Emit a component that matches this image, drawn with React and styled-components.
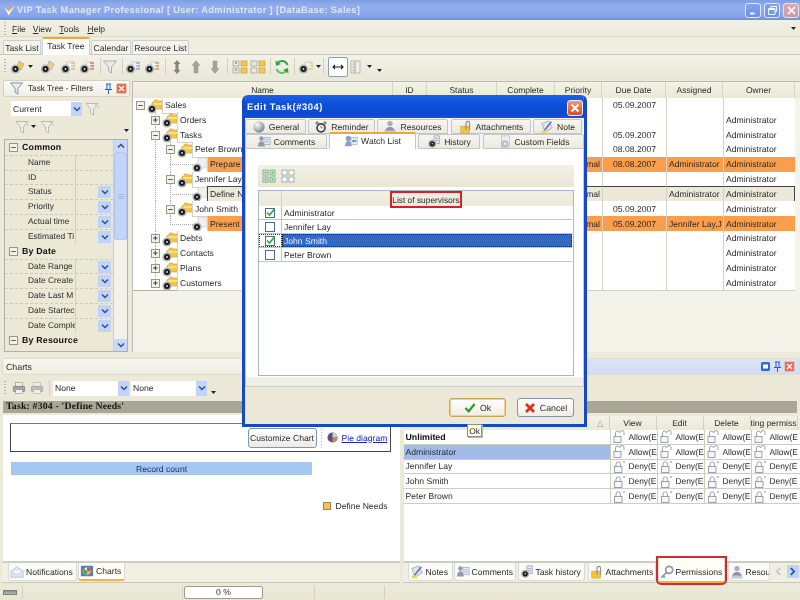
import React from "react";
import styled, { createGlobalStyle, css } from "styled-components";

const Global = createGlobalStyle`
  html, body { margin: 0; padding: 0; background: #ece9d8; }
  #root { width: 800px; height: 600px; overflow: hidden; }
  * { box-sizing: border-box; }
`;

const FONT = `"Liberation Sans", Arial, sans-serif`;

const Screen = styled.div`
  position: relative; width: 800px; height: 600px; overflow: hidden;
  display: flex; flex-direction: column; text-rendering: geometricPrecision;
  background: #ece9d8; font: 8.4px ${FONT}; color: #2b2b2b; filter: blur(.3px);
`;

/* ---------- drawn icons ---------- */
const Svg = ({ s = 16, children, vb = "0 0 16 16" }) => (
  <svg width={s} height={s} viewBox={vb} style={{ flex: "none", display: "block" }}>{children}</svg>
);
const Clock = ({ x = 5, y = 11 }) => (
  <g>
    <circle cx={x} cy={y} r="4.6" fill="#b4b4b8" />
    <circle cx={x} cy={y} r="3" fill="#1d1d1d" />
    <circle cx={x} cy={y} r=".9" fill="#e6e6e6" />
  </g>
);
const FolderClock = () => (
  <Svg>
    <path d="M5 4.500h1.500l1-2.500h3l1 1H15v8H5z" fill="#f6c544" stroke="#cf9f36" strokeWidth=".6" />
    <rect x="6" y="5" width="9" height="2" fill="#fde08a" />
    <Clock />
  </Svg>
);
const PageClock = () => (
  <Svg>
    <rect x="6" y="1" width="9" height="10" fill="#f0f0ee" stroke="#c6c6c4" strokeWidth=".6" />
    <Clock />
  </Svg>
);
const ToolClock = ({ c = "#f3c94a", kind = "doc" }) => (
  <Svg>
    {kind === "doc" && <rect x="7" y="3" width="7" height="7" fill="#f2f1ec" stroke="#bbb" strokeWidth=".6" />}
    {kind === "star" && <path d="M9 2l5 3-3 6-4-3z" fill={c} stroke="#8a8a8a" strokeWidth=".5" />}
    {kind !== "star" && <path d="M11 4h4M11 7h4M11 10h4" stroke={c} strokeWidth="1.2" />}
    <Clock x={5.5} y={10} />
  </Svg>
);
const Funnel = ({ s = 16, c = "#a9b0b0" }) => (
  <Svg s={s}>
    <path d="M1.500 2h13L9.500 8v6l-3-2V8z" fill="#e7ecee" stroke={c} strokeWidth="1" />
  </Svg>
);
const FunnelX = () => (
  <Svg>
    <path d="M2 2.500h12L9.500 8v6l-3-2V8z" fill="#eeeee6" stroke="#b9bcb4" strokeWidth="1" />
    <path d="M10 2l5 5" stroke="#b9bcb4" strokeWidth="1" />
  </Svg>
);
const VArrow = ({ dir }) => (
  <Svg>
    {dir === "both" && <path d="M8 1l3.500 4H9.600v6h1.900L8 15l-3.500-4h1.900V5H4.500z" fill="#85857f" />}
    {dir === "up" && <path d="M8 1.500l4 5H10V14H6V6.500H4z" fill="#a3a39d" stroke="#8e8e88" strokeWidth=".4" />}
    {dir === "down" && <path d="M6 2h4v7.500h2l-4 5-4-5h2z" fill="#a3a39d" stroke="#8e8e88" strokeWidth=".4" />}
  </Svg>
);
const Blocks = ({ v }) => (
  <Svg>
    {[2, 9].map((y) => [1, 9].map((x) => (
      <rect key={x + "-" + y} x={x} y={y} width="6" height="5"
        fill={x === 9 ? "#f3c94a" : "#e9e9e2"} stroke={x === 9 ? "#c79f35" : "#9a9a92"} strokeWidth=".7" />
    )))}
    {v && <path d="M3 4h2M3 11h2" stroke="#444" strokeWidth=".8" />}
  </Svg>
);
const Refresh = () => (
  <Svg>
    <path d="M13.500 6A6 6 0 0 0 3 4.500" fill="none" stroke="#3aa142" strokeWidth="2" />
    <path d="M2.500 10A6 6 0 0 0 13 11.500" fill="none" stroke="#5ec060" strokeWidth="2" />
    <path d="M1.500 1.500L2 7l5-2zM14.500 14.500L14 9l-5 2z" fill="#3aa142" />
  </Svg>
);
const Printer = ({ dim }) => (
  <Svg s={14}>
    <g opacity={dim ? 0.65 : 1}>
      <rect x="4" y="1.500" width="8" height="5" fill="#f2f2f2" stroke="#8f8f8f" strokeWidth=".7" />
      <rect x="1.500" y="6" width="13" height="6" rx="1" fill="#a3a5a8" stroke="#6e7073" strokeWidth=".7" />
      <rect x="4" y="10" width="8" height="4.500" fill="#f2f2f2" stroke="#8f8f8f" strokeWidth=".7" />
    </g>
  </Svg>
);
const FitWidth = () => (
  <Svg>
    <path d="M3 8h10M5 6L3 8l2 2M11 6l2 2-2 2" fill="none" stroke="#222" strokeWidth="1.100" />
  </Svg>
);
const Columns = () => (
  <Svg>
    <rect x="2" y="2" width="9" height="12" fill="#eeeee6" stroke="#b0b0a8" strokeWidth=".8" />
    <path d="M6 2v12M3.500 5h1.500M3.500 8h1.500M3.500 11h1.500" stroke="#8a8a84" strokeWidth=".8" />
  </Svg>
);
const CheckGrid = ({ on }) => (
  <Svg s={14} vb="0 0 14 14">
    {[1, 8].map((y) => [1, 8].map((x) => (
      <g key={x + "/" + y}>
        <rect x={x} y={y} width="5" height="5" fill={on ? "#dff0da" : "#fff"} stroke={on ? "#6c9f7e" : "#8ea29a"} strokeWidth=".8" />
        {on && <rect x={x + 1.600} y={y + 1.600} width="1.800" height="1.800" fill="#55a05f" />}
      </g>
    )))}
  </Svg>
);
const Sphere = () => (
  <Svg>
    <defs>
      <radialGradient id="sph" cx=".35" cy=".3" r=".8">
        <stop offset="0" stopColor="#fdfdfd" /><stop offset="1" stopColor="#6f7587" />
      </radialGradient>
    </defs>
    <circle cx="8" cy="8" r="6.500" fill="url(#sph)" />
  </Svg>
);
const Alarm = () => (
  <Svg>
    <circle cx="3.500" cy="3.500" r="2" fill="#8b8b8b" /><circle cx="12.500" cy="3.500" r="2" fill="#8b8b8b" />
    <circle cx="8" cy="9" r="5.500" fill="#444" /><circle cx="8" cy="9" r="3.500" fill="#f5f5f5" />
    <path d="M8 6.500V9h2" stroke="#a33" strokeWidth=".8" fill="none" />
  </Svg>
);
const People = () => (
  <Svg>
    <circle cx="8" cy="4" r="3" fill="#a9aebc" />
    <path d="M2 15c0-5 3-7 6-7s6 2 6 7z" fill="#8f95a8" />
    <rect x="2" y="12" width="12" height="3" fill="#c6cad6" />
  </Svg>
);
const Attach = () => (
  <Svg>
    <rect x="2" y="7" width="10" height="8" fill="#f3c338" stroke="#c99a2e" strokeWidth=".6" />
    <path d="M8 11V3.500a2 2 0 0 1 4 0V11" fill="none" stroke="#8d8d94" strokeWidth="1.300" />
  </Svg>
);
const Note = () => (
  <Svg>
    <path d="M2 4l8-3 4 8-8 5z" fill="#dfe3ea" stroke="#8c92a5" strokeWidth=".7" />
    <path d="M5 12L13 2" stroke="#5a79b5" strokeWidth="1.800" />
    <path d="M2 12h6v3H2z" fill="#f0cf6d" />
  </Svg>
);
const Comment = () => (
  <Svg>
    <circle cx="5" cy="4" r="2.500" fill="#8f9ab2" />
    <path d="M1 13c0-4 2-6 4-6s4 2 4 6z" fill="#8f9ab2" />
    <rect x="8" y="3" width="7" height="8" fill="#e8ecf3" stroke="#8f9ab2" strokeWidth=".7" />
    <path d="M9.500 5.500h4M9.500 8h4" stroke="#8f9ab2" strokeWidth=".8" />
  </Svg>
);
const Watch = () => (
  <Svg>
    <circle cx="5" cy="5" r="3" fill="#8da0c4" />
    <path d="M1 14c0-4 2-6 4-6s4 2 4 6z" fill="#8da0c4" />
    <rect x="8" y="4" width="7" height="8" fill="#e9eef6" stroke="#8da0c4" strokeWidth=".7" />
    <path d="M9 8l2-2v1.200h3v1.600h-3V10z" fill="#5a7fc2" />
  </Svg>
);
const History = () => (
  <Svg>
    <rect x="8" y="1" width="6" height="9" fill="#e3e6ee" stroke="#8d93a8" strokeWidth=".7" />
    <path d="M9 4h4M9 6.500h4" stroke="#8d93a8" strokeWidth=".7" />
    <Clock x={6} y={10} />
  </Svg>
);
const Gears = () => (
  <Svg>
    <rect x="4" y="1" width="9" height="13" fill="#eceef3" stroke="#b0b5c2" strokeWidth=".7" />
    <circle cx="8" cy="10" r="4" fill="#b5bcca" />
    <circle cx="8" cy="10" r="1.600" fill="#eceef3" />
  </Svg>
);
const Key = () => (
  <Svg>
    <circle cx="10.500" cy="5.500" r="4" fill="none" stroke="#8d99b5" strokeWidth="2" />
    <path d="M7.500 8.500L1.500 14.500M3.500 12.500l2 2" stroke="#8d99b5" strokeWidth="2" fill="none" />
  </Svg>
);
const Envelope = () => (
  <Svg>
    <path d="M1 7l7-5 7 5v7H1z" fill="#dfe6f3" stroke="#9fb0cc" strokeWidth=".7" />
    <path d="M1 7l7 4 7-4" fill="#fff" stroke="#9fb0cc" strokeWidth=".7" />
  </Svg>
);
const ChartIcon = () => (
  <Svg>
    <rect x="1" y="2" width="14" height="12" rx="1" fill="#5d7fb0" />
    <circle cx="8" cy="8" r="4" fill="#eee" />
    <path d="M8 8V4a4 4 0 0 1 4 4z" fill="#d8494a" />
    <path d="M8 8h4a4 4 0 0 1-4 4z" fill="#e9b63c" />
    <path d="M8 8v4a4 4 0 0 1-3-6.500z" fill="#4da04f" />
  </Svg>
);
const Pie = () => (
  <Svg s={11} vb="0 0 12 12">
    <circle cx="6" cy="6" r="5.500" fill="#6a4a7a" />
    <path d="M6 6V.5A5.500 5.500 0 0 1 11.500 6z" fill="#c8d0e0" />
    <path d="M6 6h5.500A5.500 5.500 0 0 1 6 11.500z" fill="#c58e55" />
  </Svg>
);
const LockOpen = () => (
  <Svg s={13} vb="0 0 13 13">
    <rect x="1" y="6.500" width="7" height="6" fill="#f7f7f7" stroke="#8f99a8" strokeWidth=".9" />
    <path d="M2.500 6.500V3a2 2 0 0 1 4 0M7 2.500a2 2 0 0 1 4 0V5" fill="none" stroke="#8f99a8" strokeWidth=".9" />
  </Svg>
);
const LockShut = () => (
  <Svg s={13} vb="0 0 13 13">
    <rect x="1.500" y="6.500" width="7.500" height="6" fill="#f7f7f7" stroke="#8f99a8" strokeWidth=".9" />
    <path d="M3 6.500V4a2.200 2.200 0 0 1 4.400 0v2.500" fill="none" stroke="#8f99a8" strokeWidth=".9" />
    <path d="M10 2h2M11 1v2" stroke="#8f99a8" strokeWidth=".7" />
  </Svg>
);
const Chevron = ({ c = "#2f4f94", s = 8 }) => (
  <Svg s={s} vb="0 0 8 8">
    <path d="M1 2.500L4 5.500 7 2.500" fill="none" stroke={c} strokeWidth="1.500" />
  </Svg>
);
const ChevronUp = ({ c = "#2f4f94", s = 8 }) => (
  <Svg s={s} vb="0 0 8 8">
    <path d="M1 5.500L4 2.500 7 5.500" fill="none" stroke={c} strokeWidth="1.500" />
  </Svg>
);
const ArrowGlyph = ({ back, c }) => (
  <Svg s={9} vb="0 0 8 8">
    <path d={back ? "M5.500 1L2.500 4l3 3" : "M2.500 1l3 3-3 3"} fill="none" stroke={c} strokeWidth="1.500" />
  </Svg>
);
const Tri = () => (
  <Svg s={7} vb="0 0 7 7"><path d="M1 2h5L3.500 5z" fill="#222" /></Svg>
);
const Flag = () => (
  <Svg s={11} vb="0 0 11 11">
    <rect x=".5" y=".5" width="10" height="10" rx="1" fill="#ee6c4a" stroke="#d8d8d8" strokeWidth=".6" />
    <path d="M3 3l5 5M8 3L3 8" stroke="#fff" strokeWidth="1.400" />
  </Svg>
);
const Pin = () => (
  <Svg s={11} vb="0 0 11 11">
    <path d="M3 1h5M4 1v5M7 1v5M2 6.500h7M5.500 6.500V11" stroke="#2e58c7" strokeWidth="1" fill="none" />
  </Svg>
);
const Maximize = () => (
  <Svg s={11} vb="0 0 11 11">
    <rect x="1" y="1" width="9" height="9" rx="1.500" fill="#2e6cd0" />
    <rect x="3" y="3.500" width="5" height="4" fill="#fff" />
  </Svg>
);
const CheckMark = ({ s = 9, c = "#3aa24b" }) => (
  <Svg s={s} vb="0 0 9 9">
    <path d="M1 4.500L3.500 7 8 1.500" fill="none" stroke={c} strokeWidth="1.700" />
  </Svg>
);
const AppMark = () => (
  <Svg s={13}>
    <path d="M1.500 4L7 14 15 1.500 7 9z" fill="#f6f2e6" />
    <path d="M4 3l3 6 3-5z" fill="#efa24c" />
  </Svg>
);
const WinGlyph = ({ k }) => (
  <Svg s={11} vb="0 0 11 11">
    {k === "min" && <rect x="2" y="7.500" width="4.500" height="2" fill="#f2f5fc" />}
    {k === "max" && <path d="M4 3V1.500h5.500V6.500H8M1.500 3.500h6.500v6H1.500zM1.500 4.500h6.500" fill="none" stroke="#f2f5fc" strokeWidth="1" />}
    {k === "x" && <path d="M2 2l7 7M9 2L2 9" stroke="#f7eff0" strokeWidth="1.800" />}
  </Svg>
);

/* ---------- window chrome ---------- */
const TitleBar = styled.div`
  height: 20px; flex: none; display: flex; align-items: center; padding: 0 1px 0 3px; gap: 1px;
  background: linear-gradient(to bottom, #7d9ee6 0, #93aeec 30%, #87a4ea 80%, #6f8edd 100%);
`;
const TitleText = styled.div`
  flex: 1; font: bold 9.300px ${FONT}; letter-spacing: .34px; color: #dfe6f7; white-space: nowrap;
`;
const WinBtn = styled.div`
  width: 16px; height: 15px; border-radius: 3px; display: flex; align-items: center; justify-content: center;
  margin-left: 2px; border: 1px solid #dfe7f9;
  background: ${(p) => p.$close ? "linear-gradient(#dfa9ac,#cc96a6)" : "linear-gradient(#82a3ec,#6d90e4)"};
`;
const MenuBar = styled.div`
  height: 17px; flex: none; display: flex; align-items: center; padding: 0 3px 0 4px;
  background: linear-gradient(#f1f0e5, #ecead9); border-bottom: 1px solid #dcd9c4;
`;
const Grip = styled.div`
  width: 2px; height: ${(p) => p.$h || 13}px; flex: none;
  background: repeating-linear-gradient(to bottom, #b5b29e 0 1px, transparent 1px 3px);
`;
const MenuItem = styled.span`
  margin-left: ${(p) => p.$ml}px; padding-top: 2px; font-size: 8.600px;
  & u { text-decoration: underline; }
`;
const Push = styled.div`flex: 1;`;
const DocTabs = styled.div`
  height: 18px; flex: none; display: flex; align-items: flex-end; padding-left: 3px; gap: 1px;
  background: #efeddf; border-bottom: 1px solid #c9c7b5;
`;
const DocTab = styled.div`
  width: ${(p) => p.$w}px; height: ${(p) => (p.$on ? 18 : 14)}px; display: flex; align-items: center; justify-content: center;
  border: 1px solid #c8cfd4; border-bottom: none; border-radius: 2px 2px 0 0; font-size: 8.600px;
  background: ${(p) => (p.$on ? "#fff" : "#f5f4ec")}; position: relative; top: ${(p) => (p.$on ? 1 : 0)}px;
  ${(p) => p.$on && css`border-top: 2px solid #f0a63a; padding-bottom: 2px;`}
`;
const Toolbar = styled.div`
  height: 25px; flex: none; display: flex; align-items: center; padding: 0 3px 2px 4px;
  background: linear-gradient(#f3f2e8, #e9e7d6);
`;
const ToolSlot = styled.div`
  display: flex; align-items: center; flex: none;
  margin-left: ${(p) => p.$ml || 0}px; margin-top: ${(p) => p.$mt || 0}px; gap: 1px;
  ${(p) => p.$on && css`border: 1px solid #8d9cae; border-radius: 2px; background: #fdfdfb; padding: 1px;`}
`;
const ToolSep = styled.div`
  width: 1px; height: 17px; flex: none; background: #d3d1bd; margin-left: ${(p) => p.$ml}px;
`;

/* ---------- workspace ---------- */
const Workspace = styled.div`
  height: 272px; flex: none; display: flex; padding-left: 3px;
`;
const FilterPanel = styled.div`
  width: 127px; flex: none; display: flex; flex-direction: column;
`;
const PanelHead = styled.div`
  height: 17px; flex: none; display: flex; align-items: center; gap: 2px; padding: 0 2px 0 5px;
  background: linear-gradient(#fbfbf8, #f0efe6); border: 1px solid #d5d3c0; border-radius: 2px; font-size: 8.200px;
`;
const PanelTitle = styled.span`flex: 1; white-space: nowrap; padding-left: 2px;`;
const FilterTools = styled.div`
  height: 42px; flex: none; display: flex; flex-direction: column; padding: 4px 0 0 8px; gap: 3px;
`;
const ToolLine = styled.div`
  display: flex; align-items: center; gap: 0; height: 15px; padding-left: ${(p) => p.$pl || 0}px;
`;
const Combo = styled.div`
  width: ${(p) => p.$w}px; height: 15px; background: #fff; display: flex; align-items: center;
  justify-content: space-between; flex: none; padding-left: 2px; font-size: 8.600px;
`;
const ComboBtn = styled.div`
  width: ${(p) => p.$w || 11}px; height: ${(p) => p.$h || 15}px; flex: none; background: #c2d3f8;
  display: flex; align-items: center; justify-content: center;
`;
const PropBox = styled.div`
  flex: 1; min-height: 0; display: flex; border: 1px solid #aeb2a8; margin-left: 1px; overflow: hidden; margin-right: 2px;
`;
const PropGrid = styled.div`
  flex: 1; min-width: 0; overflow: hidden; background: #ebe8d6;
`;
const PropCat = styled.div`
  height: 14.830px; display: flex; align-items: center; padding-left: 4px; gap: 4px; font: bold 8.800px ${FONT};
  color: #111; letter-spacing: .2px;
`;
const PropRow = styled.div`
  height: 14.830px; display: flex; border-top: 1px dashed #cdcab6; white-space: nowrap;
`;
const PropName = styled.div`
  width: 71px; flex: none; padding-left: 23px; overflow: hidden; line-height: 13px; font-size: 8.400px;
  border-right: 1px solid #d2cfbb;
`;
const PropValue = styled.div`
  flex: 1; display: flex; justify-content: flex-end; align-items: center; padding-right: 2px;
`;
const ExpBox = styled.div`
  width: 9px; height: 9px; flex: none; border: 1px solid #96968d; background: #f2f2ea; display: flex; align-items: center; justify-content: center;
  font: bold 9px/7px ${FONT}; color: #444;
`;
const ScrollBar = styled.div`
  width: 14px; flex: none; background: #f3f2ea; display: flex; flex-direction: column; border-left: 1px solid #d2d0bc;
`;
const ScrollBtn = styled.div`
  height: 12px; flex: none; background: #c8d7fb; display: flex; align-items: center; justify-content: center;
`;
const ScrollThumb = styled.div`
  height: 88px; flex: none; background: #c3d4fb; border: 1px solid #b3c5f0; border-radius: 2px;
  display: flex; align-items: center; justify-content: center;
`;
const ThumbGrip = styled.div`
  width: 6px; height: 5px; background: repeating-linear-gradient(to bottom,#a4b8e6 0 1px,transparent 1px 2px);
`;
const ScrollGap = styled.div`flex: 1;`;

/* tree grid */
const TreePanel = styled.div`
  flex: 1; min-width: 0; margin-left: 2px; display: flex; flex-direction: column;
  border: 1px solid #b9bcb4; border-right: none; border-bottom: none; background: #f4f3ea; margin-top: 1px;
`;
const gridCols = "260px 34px 70px 58px 47px 64px 57px 72px";
const HeadRow = styled.div`
  height: 15.500px; flex: none; display: grid; grid-template-columns: ${gridCols};
  background: linear-gradient(#f4f2e6, #ebe8d8);
`;
const HeadCell = styled.div`
  display: flex; align-items: center; justify-content: center; font-size: 8.500px; border-right: 1px solid #d8d5c2; white-space: nowrap;
`;
const TreeBody = styled.div`
  flex: none; height: 193px; background: #fff; border-bottom: 1px solid #b0b0a6; width: 662px;
`;
const TreeRow = styled.div`
  height: 14.830px; display: grid; grid-template-columns: ${gridCols};
`;
const rowTone = (p) => p.$tone === "hot" ? "#fb9e4b" : p.$tone === "focus" ? "#ece9d8" : "#fff";
const NameCell = styled.div`
  display: flex; align-items: stretch; min-width: 0; height: 100%;
`;
const Guide = styled.div`
  width: 15px; flex: none; display: flex; align-items: center; justify-content: center;
  background-repeat: no-repeat;
  background-image:
    ${(p) => (p.$v ? "repeating-linear-gradient(to bottom,#a9a9a9 0 1px,transparent 1px 2px)" : "none")},
    ${(p) => (p.$h ? "repeating-linear-gradient(to right,#a9a9a9 0 1px,transparent 1px 2px)" : "none")};
  background-size: 1px ${(p) => (p.$v === "half" ? "50%" : "100%")}, ${(p) => (p.$right ? "8px" : "15px")} 1px;
  background-position: 7px 0, ${(p) => (p.$right ? "7px" : "0")} 50%;
`;
const IconCell = styled.div`
  width: 14px; flex: none; display: flex; align-items: center; justify-content: center;
`;
const NameBox = styled.div`
  flex: 1; min-width: 0; display: flex; align-items: center; padding-left: 2px; white-space: nowrap;
  background: ${rowTone}; border-left: 1px solid #d4d2c4; border-bottom: 1px solid #d4d2c4; font-size: 8.600px;
  ${(p) => p.$tone === "focus" && css`border: 1px solid #444;`}
`;
const DataCell = styled.div`
  display: flex; align-items: center; padding: 0 2px; overflow: hidden; white-space: nowrap; font-size: 8.600px;
  justify-content: ${(p) => p.$a || "flex-start"};
  background: ${rowTone}; border-left: 1px solid #d4d2c4; border-bottom: 1px solid #d4d2c4;
  ${(p) => p.$tone === "focus" && css`border-top: 1px solid #444; border-bottom: 1px solid #444;`}
  ${(p) => p.$tone === "focus" && p.$last && css`border-right: 1px solid #444;`}
`;
const TreeFill = styled.div`flex: 1;`;

const Splitter = styled.div`height: 6px; flex: none; background: #eceadb;`;

/* ---------- bottom area ---------- */
const Bottom = styled.div`
  height: 225px; flex: none; display: flex; gap: 2px;
`;
const Dock = styled.div`
  flex: 1; min-width: 0; display: flex; flex-direction: column; padding-left: ${(p) => p.$pl ?? 2}px;
`;
const DockHead = styled.div`
  height: 17px; flex: none; display: flex; align-items: center; justify-content: flex-end; padding: 0 4px 0 1px; gap: 1px;
  border: 1px solid #dedcca; border-radius: 2px; font-size: 8.800px;
  background: ${(p) => (p.$blue ? "linear-gradient(#dbe3f7,#d2dcf5)" : "linear-gradient(#f8f7f0,#efeee1)")};
`;
const DockTool = styled.div`
  height: 26px; flex: none; display: flex; align-items: center; padding-left: 2px;
`;
const TaskStrip = styled.div`
  height: 12px; flex: none; background: #aaa696; font: bold 9.800px "Liberation Serif", serif; color: #111;
  padding-left: 3px; line-height: 12px; margin: 0 ${(p) => p.$mr || 0}px 0 1px; letter-spacing: .18px; white-space: nowrap;
`;
const ChartBody = styled.div`
  flex: 1; min-height: 0; background: #fff; margin: 2px 0 0 1px; border-bottom: 1px solid #c6d0da;
  padding: 8px 9px 0 7px; display: flex; flex-direction: column;
`;
const ChartControls = styled.div`
  height: 29px; flex: none; border: 1px solid #444; border-top-color: #777; display: flex; align-items: center; justify-content: flex-end; padding-right: 4px;
`;
const CustomizeBtn = styled.div`
  width: 69px; height: 20px; border: 1px solid #7b96ae; border-radius: 3px; display: flex; align-items: center; justify-content: center;
  background: linear-gradient(#fff, #ecebe3); font-size: 8.600px; white-space: nowrap;
`;
const DotSep = styled.div`
  width: 1px; height: 24px; margin: 0 5px 0 4px; flex: none;
  background: repeating-linear-gradient(to bottom,#b9b39a 0 1px,transparent 1px 3px);
`;
const PieLink = styled.a`
  margin-left: 4px; width: 44px; color: #1a22c8; text-decoration: underline; font-size: 8.600px; white-space: nowrap; flex: none;
`;
const RecordBar = styled.div`
  margin: 10px 0 0 1px; width: 301px; height: 13px; background: #a4c8ee; color: #1a2f8a; flex: none;
  display: flex; align-items: center; justify-content: center; font-size: 8.600px;
`;
const Legend = styled.div`
  margin-top: 26px; display: flex; align-items: center; justify-content: flex-end; gap: 4px; padding-right: 3px; font-size: 8.600px;
`;
const LegendSwatch = styled.div`
  width: 8px; height: 8px; background: #f3c05f; border: 1px solid #9b8448; flex: none;
`;
const BottomTabs = styled.div`
  height: 21px; flex: none; display: flex; align-items: flex-start;
  padding-left: ${(p) => p.$pl}px; background: #f1efe2; border-top: 1px solid #cfcdb9; border-bottom: 1px solid #c9c7b5;
`;
const BTab = styled.div`
  width: ${(p) => p.$w}px; height: 18px; flex: none; display: flex; align-items: center; gap: 2px; padding-left: 1px;
  margin-left: ${(p) => p.$ml ?? 1}px;
  border: 1px solid #d9dbd5; border-top: none; border-radius: 0 0 3px 3px;
  background: ${(p) => (p.$on ? "#fffdf6" : "#fbfbf6")}; font-size: 8.600px; white-space: nowrap; overflow: hidden;
  & svg { width: 14px; height: 14px; }
  ${(p) => p.$on && css`border-bottom: 2px solid #f2b24a;`}
  ${(p) => p.$mark && css`overflow: visible; outline: 2px solid #d42a2a; height: 25px; margin-top: -5px; padding-top: 5px; z-index: 1;`}
`;
const TabArrows = styled.div`
  margin-left: 3px; display: flex; gap: 2px; margin-top: 2px;
`;
const TabArrow = styled.div`
  width: 12px; height: 13px; background: ${(p) => (p.$on ? "#c2d3f8" : "#eeeee2")}; display: flex; align-items: center; justify-content: center;
`;
const permCols = "206px 47px 47px 47px 47px";
const PermHead = styled.div`
  height: 14px; flex: none; display: grid; grid-template-columns: ${permCols}; margin: 3px 0 0 1px;
  background: linear-gradient(#f4f2e6, #ebe8d8);
`;
const PermHeadCell = styled.div`
  display: flex; align-items: center; justify-content: ${(p) => p.$end ? "flex-end" : "center"}; font-size: 8.500px;
  overflow: hidden; white-space: nowrap; border-right: 1px solid #d3d0bc; padding-right: ${(p) => p.$end ? 5 : 0}px; color: ${(p) => p.$end ? "#9a9a90" : "#2b2b2b"};
`;
const PermBody = styled.div`
  flex: 1; min-height: 0; background: #fff; margin-left: 1px; border-bottom: 1px solid #c6d0da;
`;
const PermRow = styled.div`
  height: 14.800px; display: grid; grid-template-columns: ${permCols}; border-bottom: 1px solid #cfcdbd;
`;
const PermName = styled.div`
  padding-left: 2px; display: flex; align-items: center; font-size: ${(p) => p.$b ? "8.800px" : "8.600px"};
  font-weight: ${(p) => (p.$b ? 700 : 400)}; color: ${(p) => (p.$b ? "#111" : "#2b2b2b")};
  background: ${(p) => (p.$sel ? "#a2bce8" : "#fff")};
`;
const PermCell = styled.div`
  display: flex; align-items: center; gap: 3px; padding-left: 2px; border-left: 1px solid #cfcdbd; overflow: hidden; white-space: nowrap; font-size: 8.400px;
`;

/* ---------- status ---------- */
const StatusBar = styled.div`
  flex: 1; display: flex; align-items: center; background: linear-gradient(#ecead9, #e8e6d3); padding-top: 1px;
`;
const StatusCell = styled.div`
  width: ${(p) => p.$w}px; height: 13px; flex: none; border-right: 1px solid #d3d0bc; display: flex; align-items: center; padding-left: 3px;
`;
const StatusLed = styled.div`
  width: 14px; height: 5px; background: linear-gradient(#8b8f8c, #b9bcb9); border: 1px solid #7b7f7c;
`;
const Progress = styled.div`
  width: 79px; height: 13px; flex: none; background: #fff; border: 1px solid #9f9d8e; border-radius: 2px;
  display: flex; align-items: center; justify-content: center; font-size: 8.600px; margin-left: 1px; margin-right: 1px;
`;

/* ---------- modal dialog ---------- */
const Dialog = styled.div`
  position: absolute; left: 242px; top: 95px; width: 345px; height: 332px;
  border: 3px solid #1549c7; border-top: none; border-radius: 6px 6px 0 0;
  background: #ece9d8; display: flex; flex-direction: column; overflow: hidden;
`;
const DlgTitle = styled.div`
  height: 23px; flex: none; display: flex; align-items: center; justify-content: space-between;
  background: linear-gradient(#1a62e8, #0d50d6 40%, #0a4bd0 85%, #1358de); color: #f2f5fc; font: bold 9.500px ${FONT}; letter-spacing: .45px;
  margin: 0 -3px; padding: 2px 4px 0 5px;
`;
const DlgClose = styled.div`
  width: 16px; height: 16px; border-radius: 3px; border: 1px solid #f3f3f3;
  background: linear-gradient(#f09a72, #d84b26); display: flex; align-items: center; justify-content: center;
`;
const DlgTabs = styled.div`
  flex: none; background: #fff; display: flex; flex-direction: column;
`;
const DlgTabRow = styled.div`
  height: ${(p) => p.$h}px; display: flex; gap: 2px; align-items: flex-end; background: #f3f5f8;
`;
const DlgTab = styled.div`
  width: ${(p) => p.$w}px; height: ${(p) => (p.$on ? 17 : 15)}px; flex: none; margin-left: ${(p) => p.$ml || 0}px;
  display: flex; align-items: center; justify-content: center; gap: 3px; white-space: nowrap; font-size: 8.600px;
  border: 1px solid #bfc7cc; border-bottom: ${(p) => (p.$on ? "none" : "1px solid #bfc7cc")}; border-radius: 2px 2px 0 0;
  background: ${(p) => (p.$on ? "#fff" : "linear-gradient(#f7f6ef,#eceadd)")};
  ${(p) => p.$on && css`border-top: 2px solid #f0a63a; align-self: flex-end; padding-bottom: 2px;`}
  & svg { width: 14px; height: 14px; }
`;
const DlgBody = styled.div`
  height: 238px; flex: none; background: linear-gradient(#fff 96%, #f1f0e8 96%); padding: 16px 9px 10px 12px;
  display: flex; flex-direction: column; border: 1px solid #c5ccd2; border-top: none;
`;
const DlgTool = styled.div`
  height: 22px; flex: none; display: flex; align-items: center; gap: 5px; padding-left: 4px;
  background: linear-gradient(#f3f1e6, #e9e6d5);
`;
const WatchGrid = styled.div`
  flex: 1; margin-top: 3px; border: 1px solid #a9b6c6; display: flex; flex-direction: column; min-height: 0; background: #fff;
`;
const WatchHead = styled.div`
  height: 15px; flex: none; display: flex; background: linear-gradient(#f2f0e3, #ebe8d8);
`;
const WatchCheckHead = styled.div`
  width: 23px; flex: none; border-right: 1px solid #d5d2bf;
`;
const WatchTitle = styled.div`
  flex: 1; display: flex; justify-content: center; align-items: flex-start; padding-right: 3px;
`;
const RedMark = styled.span`
  display: flex; align-items: center; justify-content: center; height: 17px; width: 72px; flex: none; white-space: nowrap;
  border: 2px solid #d61f26; font-size: 8.400px; z-index: 1;
`;
const WatchRow = styled.div`
  height: 14px; flex: none; display: flex; border-bottom: 1px solid #bfc6c8; margin-right: 1px;
`;
const WatchCheckCell = styled.div`
  width: 23px; flex: none; display: flex; align-items: center; justify-content: center; border-right: 1px solid #c7c7bb;
  ${(p) => p.$sel && css`outline: 1px dotted #333; outline-offset: -1px;`}
`;
const Check = styled.div`
  width: 10px; height: 10px; border: 1px solid #4a6f8e; background: #fff; display: flex; align-items: center; justify-content: center;
`;
const WatchName = styled.div`
  flex: 1; display: flex; align-items: center; padding-left: 2px; font-size: 8.600px;
  background: ${(p) => (p.$sel ? "#326ac2" : "#fff")}; color: ${(p) => (p.$sel ? "#e8eefb" : "#2b2b2b")};
  ${(p) => p.$sel && css`outline: 1px dotted #222; outline-offset: -1px;`}
`;
const DlgFoot = styled.div`
  flex: 1; display: flex; justify-content: flex-end; align-items: flex-start; gap: 11px; padding: 11px 10px 0 0;
`;
const FootBtn = styled.div`
  width: ${(p) => p.$w}px; height: 19px; border-radius: 3px; display: flex; align-items: center; justify-content: center; gap: 4px; font-size: 8.800px;
  border: 1px solid ${(p) => (p.$def ? "#c7a458" : "#7b96ae")}; background: linear-gradient(#fff, #efede4);
  ${(p) => p.$def && css`box-shadow: inset 0 0 0 1px #f2d18a;`}
`;
const Tooltip = styled.div`
  position: absolute; left: 467px; top: 424px; width: 15px; height: 13px; background: #ffffe1; border: 1px solid #8f8f80;
  box-shadow: 1px 1px 0 #bbb; display: flex; align-items: center; justify-content: center; font-size: 8.400px;
`;
const CrossBtn = () => (
  <Svg s={12} vb="0 0 12 12">
    <path d="M2 2l8 8M10 2l-8 8" stroke="#dd2e22" strokeWidth="2.800" />
  </Svg>
);

/* ---------- data ---------- */
const toolItems = [
  { ml: 4, el: <ToolClock kind="star" c="#f3c94a" />, dd: true },
  { ml: 6, el: <ToolClock kind="star" c="#e8d58a" /> },
  { ml: 4, el: <ToolClock c="#e8b13d" /> },
  { ml: 3, el: <ToolClock c="#d8413a" /> },
  { sep: 5 },
  { ml: 1, el: <Funnel /> },
  { sep: 4 },
  { ml: 2, el: <ToolClock c="#6f8fdc" /> },
  { ml: 3, el: <ToolClock c="#e2773a" /> },
  { sep: 5 },
  { ml: 3, el: <VArrow dir="both" /> },
  { ml: 3, el: <VArrow dir="up" /> },
  { ml: 3, el: <VArrow dir="down" /> },
  { sep: 4 },
  { ml: 4, el: <Blocks v /> },
  { ml: 2, el: <Blocks /> },
  { sep: 4 },
  { ml: 3, el: <Refresh /> },
  { sep: 4 },
  { ml: 3, el: <ToolClock />, dd: true },
  { sep: 1 },
  { ml: 4, el: <FitWidth />, on: true },
  { ml: 1, el: <Columns />, dd: true },
  { ml: 3, mt: 7, el: <Tri /> },
];

const O = "Administrator";
const rows = [
  { d: 0, exp: "-", name: "Sales", due: "05.09.2007", owner: "" },
  { d: 1, exp: "+", name: "Orders", owner: O, ev: 1 },
  { d: 1, exp: "-", name: "Tasks", due: "05.09.2007", owner: O, ev: 1 },
  { d: 2, exp: "-", name: "Peter Brown", due: "08.08.2007", owner: O, g: [0, 1] },
  { d: 3, leaf: 1, name: "Prepare Report", tone: "hot", due: "08.08.2007", prio: "Normal", as: O, owner: O, g: [0, 1, 2] },
  { d: 2, exp: "-", name: "Jennifer Lay", owner: O, g: [0, 1], ev: 1 },
  { d: 3, leaf: 1, name: "Define Needs", tone: "focus", prio: "Normal", as: O, owner: O, g: [0, 1, 2] },
  { d: 2, exp: "-", name: "John Smith", due: "05.09.2007", owner: O, g: [0, 1], ev: 1 },
  { d: 3, leaf: 1, name: "Present Plan", tone: "hot", due: "05.09.2007", prio: "Normal", as: "Jennifer Lay,J", owner: O, g: [0, 1, 3] },
  { d: 1, exp: "+", name: "Debts", owner: O, ev: 1 },
  { d: 1, exp: "+", name: "Contacts", owner: O, ev: 1 },
  { d: 1, exp: "+", name: "Plans", owner: O, ev: 1 },
  { d: 1, exp: "+", name: "Customers", owner: O, ev: "half" },
];

const filterCommon = [["Name"], ["ID"], ["Status", 1], ["Priority", 1], ["Actual time", 1], ["Estimated Ti", 1]];
const filterDate = [["Date Range", 1], ["Date Create", 1], ["Date Last M", 1], ["Date Startec", 1], ["Date Comple", 1]];

const Row = ({ r }) => {
  const guides = [];
  for (let i = 0; i < r.d; i++) {
    const kind = r.g ? r.g[i] : 0;
    guides.push(
      <Guide key={i} $v={i === 1 && r.d >= 2 ? true : kind === 2 ? true : kind === 3 ? "half" : false} $h={kind === 2 || kind === 3} $right={kind === 2 || kind === 3} />
    );
  }
  return (
    <TreeRow>
      <NameCell>
        {guides}
        <Guide $v={r.ev || (r.d === 2 ? true : false)} $h={!!r.leaf}>
          {r.exp && <ExpBox>{r.exp === "+" ? "+" : "–"}</ExpBox>}
        </Guide>
        <IconCell>{r.leaf ? <PageClock /> : <FolderClock />}</IconCell>
        <NameBox $tone={r.tone}>{r.name}</NameBox>
      </NameCell>
      <DataCell $tone={r.tone} />
      <DataCell $tone={r.tone} />
      <DataCell $tone={r.tone} />
      <DataCell $tone={r.tone} $a="flex-end">{r.prio}</DataCell>
      <DataCell $tone={r.tone} $a="center">{r.due}</DataCell>
      <DataCell $tone={r.tone}>{r.as}</DataCell>
      <DataCell $tone={r.tone} $last>{r.owner}</DataCell>
    </TreeRow>
  );
};

const PropLine = ({ name, combo }) => (
  <PropRow>
    <PropName>{name}</PropName>
    <PropValue>{combo && <ComboBtn $w={13} $h={12}><Chevron /></ComboBtn>}</PropValue>
  </PropRow>
);

const perm = [
  { n: "Unlimited", b: 1, open: 1 },
  { n: "Administrator", sel: 1, open: 1 },
  { n: "Jennifer Lay" },
  { n: "John Smith" },
  { n: "Peter Brown" },
];

export default function App() {
  return (
    <>
      <Global />
      <Screen>
        <TitleBar>
          <AppMark />
          <TitleText>VIP Task Manager Professional [ User: Administrator ] [DataBase: Sales]</TitleText>
          <WinBtn><WinGlyph k="min" /></WinBtn>
          <WinBtn><WinGlyph k="max" /></WinBtn>
          <WinBtn $close><WinGlyph k="x" /></WinBtn>
        </TitleBar>
        <MenuBar>
          <Grip />
          <MenuItem $ml={6}><u>F</u>ile</MenuItem>
          <MenuItem $ml={7}><u>V</u>iew</MenuItem>
          <MenuItem $ml={8}><u>T</u>ools</MenuItem>
          <MenuItem $ml={8}><u>H</u>elp</MenuItem>
          <Push />
          <Tri />
        </MenuBar>
        <DocTabs>
          <DocTab $w={38}>Task List</DocTab>
          <DocTab $w={48} $on>Task Tree</DocTab>
          <DocTab $w={40}>Calendar</DocTab>
          <DocTab $w={57}>Resource List</DocTab>
        </DocTabs>
        <Toolbar>
          <Grip $h={15} />
          {toolItems.map((t, i) =>
            t.sep ? (
              <ToolSep key={i} $ml={t.sep} />
            ) : (
              <ToolSlot key={i} $ml={t.ml} $mt={t.mt} $on={t.on}>
                {t.el}
                {t.dd && <Tri />}
              </ToolSlot>
            )
          )}
        </Toolbar>
        <Workspace>
          <FilterPanel>
            <PanelHead>
              <Funnel s={15} c="#7f8fa0" />
              <PanelTitle>Task Tree - Filters</PanelTitle>
              <Pin />
              <Flag />
            </PanelHead>
            <FilterTools>
              <ToolLine>
                <Combo $w={71}>Current<ComboBtn $h={14}><Chevron /></ComboBtn></Combo>
                <ToolSlot $ml={2}><FunnelX /></ToolSlot>
              </ToolLine>
              <ToolLine $pl={3}>
                <FunnelX />
                <Tri />
                <ToolSlot $ml={2}><FunnelX /></ToolSlot>
                <Push />
                <ToolSlot $mt={8}><Tri /></ToolSlot>
              </ToolLine>
            </FilterTools>
            <PropBox>
              <PropGrid>
                <PropCat><ExpBox>–</ExpBox>Common</PropCat>
                {filterCommon.map(([n, c]) => <PropLine key={n} name={n} combo={c} />)}
                <PropCat><ExpBox>–</ExpBox>By Date</PropCat>
                {filterDate.map(([n, c]) => <PropLine key={n} name={n} combo={c} />)}
                <PropCat><ExpBox>–</ExpBox>By Resource</PropCat>
              </PropGrid>
              <ScrollBar>
                <ScrollBtn><ChevronUp /></ScrollBtn>
                <ScrollThumb><ThumbGrip /></ScrollThumb>
                <ScrollGap />
                <ScrollBtn><Chevron /></ScrollBtn>
              </ScrollBar>
            </PropBox>
          </FilterPanel>
          <TreePanel>
            <HeadRow>
              {["Name", "ID", "Status", "Complete", "Priority", "Due Date", "Assigned", "Owner"].map((h) => (
                <HeadCell key={h}>{h}</HeadCell>
              ))}
            </HeadRow>
            <TreeBody>
              {rows.map((r) => <Row key={r.name} r={r} />)}
            </TreeBody>
            <TreeFill />
          </TreePanel>
        </Workspace>
        <Splitter />
        <Bottom>
          <Dock>
            <DockHead><PanelTitle>Charts</PanelTitle></DockHead>
            <DockTool>
              <Grip $h={15} />
              <ToolSlot $ml={6}><Printer /></ToolSlot>
              <ToolSlot $ml={4}><Printer dim /></ToolSlot>
              <ToolSep $ml={5} />
              <ToolSlot $ml={3}><Combo $w={76}>None<ComboBtn><Chevron /></ComboBtn></Combo></ToolSlot>
              <ToolSlot $ml={2}><Combo $w={76}>None<ComboBtn><Chevron /></ComboBtn></Combo></ToolSlot>
              <ToolSlot $ml={3} $mt={8}><Tri /></ToolSlot>
            </DockTool>
            <TaskStrip>Task: #304 - 'Define Needs'</TaskStrip>
            <ChartBody>
              <ChartControls>
                <CustomizeBtn>Customize Chart</CustomizeBtn>
                <DotSep />
                <Pie />
                <PieLink>Pie diagram</PieLink>
              </ChartControls>
              <RecordBar>Record count</RecordBar>
              <Legend><LegendSwatch />Define Needs</Legend>
            </ChartBody>
            <BottomTabs $pl={5}>
              <BTab $w={69}><Envelope />Notifications</BTab>
              <BTab $w={47} $on><ChartIcon />Charts</BTab>
            </BottomTabs>
          </Dock>
          <Dock $pl={1}>
            <DockHead $blue><Maximize /><Pin /><Flag /></DockHead>
            <DockTool />
            <TaskStrip $mr={3} />
            <PermHead>
              <PermHeadCell $end>△</PermHeadCell>
              <PermHeadCell>View</PermHeadCell>
              <PermHeadCell>Edit</PermHeadCell>
              <PermHeadCell>Delete</PermHeadCell>
              <PermHeadCell>ting permiss</PermHeadCell>
            </PermHead>
            <PermBody>
              {perm.map((p) => (
                <PermRow key={p.n}>
                  <PermName $b={p.b} $sel={p.sel}>{p.n}</PermName>
                  {[0, 1, 2, 3].map((i) => (
                    <PermCell key={i}>
                      {p.open ? <LockOpen /> : <LockShut />}
                      {p.open ? "Allow(E" : "Deny(E"}
                    </PermCell>
                  ))}
                </PermRow>
              ))}
            </PermBody>
            <BottomTabs $pl={5}>
              <BTab $w={45} $ml={0}><Note />Notes</BTab>
              <BTab $w={62}><Comment />Comments</BTab>
              <BTab $w={67} $ml={2}><History />Task history</BTab>
              <BTab $w={68} $ml={3}><Attach />Attachments</BTab>
              <BTab $w={67} $ml={2} $on $mark><Key />Permissions</BTab>
              <BTab $w={42} $ml={3}><People />Resou</BTab>
              <TabArrows>
                <TabArrow><ArrowGlyph back c="#c8c8bc" /></TabArrow>
                <TabArrow $on><ArrowGlyph c="#2f4f94" /></TabArrow>
              </TabArrows>
            </BottomTabs>
          </Dock>
        </Bottom>
        <StatusBar>
          <StatusCell $w={23}><StatusLed /></StatusCell>
          <StatusCell $w={160} />
          <Progress>0 %</Progress>
          <StatusCell $w={51} />
          <StatusCell $w={70} />
        </StatusBar>

        <Dialog>
          <DlgTitle>
            <span>Edit Task(#304)</span>
            <DlgClose><Svg s={10} vb="0 0 10 10"><path d="M1.500 1.500l7 7M8.500 1.500l-7 7" stroke="#fff" strokeWidth="1.800" /></Svg></DlgClose>
          </DlgTitle>
          <DlgTabs>
            <DlgTabRow $h={16}>
              <DlgTab $w={61}><Sphere />General</DlgTab>
              <DlgTab $w={67}><Alarm />Reminder</DlgTab>
              <DlgTab $w={71}><People />Resources</DlgTab>
              <DlgTab $w={80} $ml={1}><Attach />Attachments</DlgTab>
              <DlgTab $w={49}><Note />Note</DlgTab>
            </DlgTabRow>
            <DlgTabRow $h={15}>
              <DlgTab $w={82}><Comment />Comments</DlgTab>
              <DlgTab $w={87} $on><Watch />Watch List</DlgTab>
              <DlgTab $w={62}><History />History</DlgTab>
              <DlgTab $w={101} $ml={1}><Gears />Custom Fields</DlgTab>
            </DlgTabRow>
          </DlgTabs>
          <DlgBody>
            <DlgTool><CheckGrid on /><CheckGrid /></DlgTool>
            <WatchGrid>
              <WatchHead>
                <WatchCheckHead />
                <WatchTitle><RedMark>List of supervisors</RedMark></WatchTitle>
              </WatchHead>
              {[["Administrator", 1], ["Jennifer Lay", 0], ["John Smith", 1, 1], ["Peter Brown", 0]].map(([n, c, s]) => (
                <WatchRow key={n}>
                  <WatchCheckCell $sel={s}><Check>{c ? <CheckMark /> : null}</Check></WatchCheckCell>
                  <WatchName $sel={s}>{n}</WatchName>
                </WatchRow>
              ))}
            </WatchGrid>
          </DlgBody>
          <DlgFoot>
            <FootBtn $w={57} $def><CheckMark s={12} c="#2d9a3c" />Ok</FootBtn>
            <FootBtn $w={57}><CrossBtn />Cancel</FootBtn>
          </DlgFoot>
        </Dialog>
        <Tooltip>Ok</Tooltip>
      </Screen>
    </>
  );
}
